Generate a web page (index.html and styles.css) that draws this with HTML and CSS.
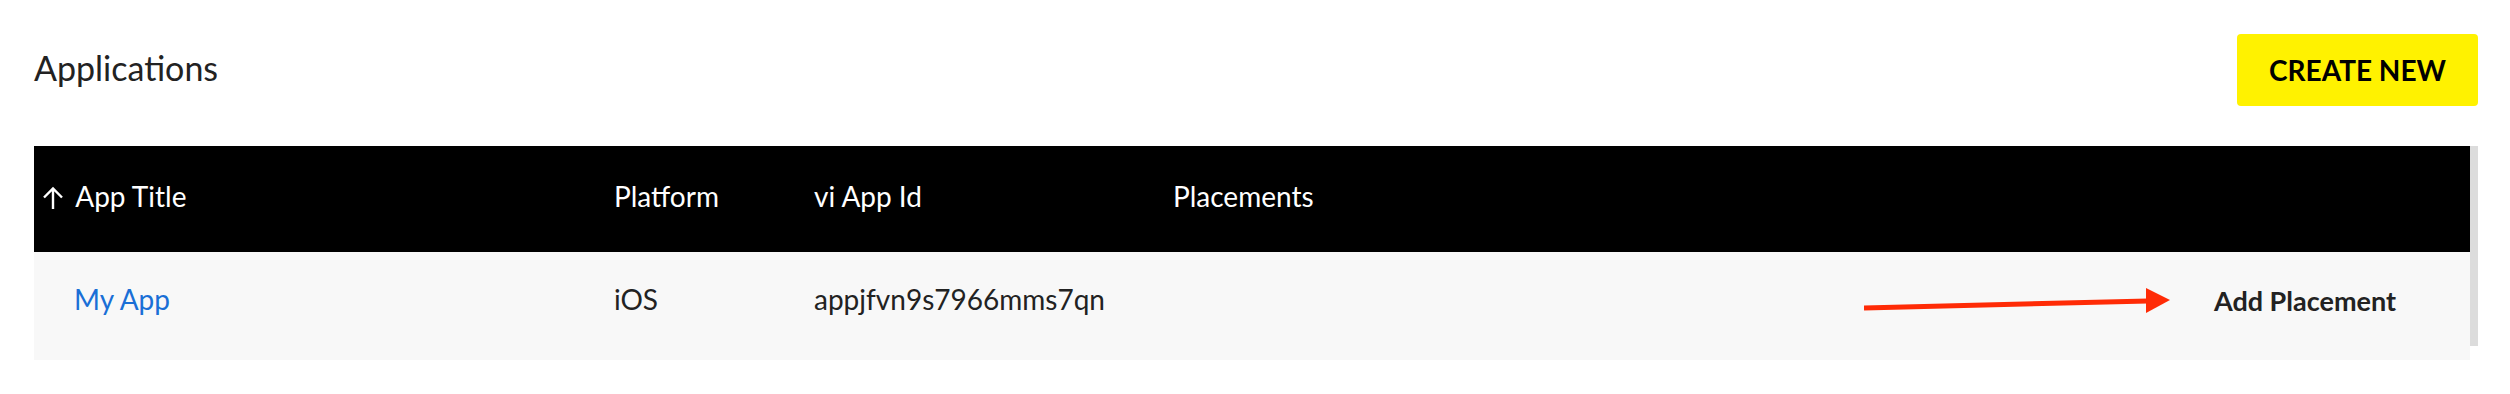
FILE: index.html
```html
<!DOCTYPE html>
<html lang="en">
<head>
  <meta charset="UTF-8">
  <title>Applications</title>
  <link rel="stylesheet" href="styles.css">
</head>
<body>
  <div class="page-header">
    <h1>Applications</h1>
    <button class="create-btn">CREATE NEW</button>
  </div>
  <div class="table-wrap">
    <table class="apps-table">
      <colgroup>
        <col class="col-title">
        <col class="col-platform">
        <col class="col-id">
        <col>
      </colgroup>
      <thead>
        <tr>
          <th class="sortable">
            <svg class="sort-arrow" width="22" height="24" viewBox="0 0 22 24"><path d="M11 23V2.5M2 11.5l9-9 9 9" fill="none" stroke="#fff" stroke-width="2.4"/></svg>
            App Title
          </th>
          <th>Platform</th>
          <th>vi App Id</th>
          <th>Placements</th>
        </tr>
      </thead>
      <tbody>
        <tr>
          <td class="app-name"><a href="#">My App</a></td>
          <td>iOS</td>
          <td>appjfvn9s7966mms7qn</td>
          <td class="actions">
            <!-- pointer drawn over the screenshot -->
            <svg class="pointer" width="306" height="30" viewBox="0 0 306 30"><path d="M0 22L284 15" stroke="#ff2b06" stroke-width="5"/><polygon points="282,2 306,14 282,27" fill="#ff2b06"/></svg>
            <span class="add-placement">Add Placement</span>
          </td>
        </tr>
      </tbody>
    </table>
    <div class="scroll-track"></div>
  </div>
</body>
</html>
```

FILE: styles.css
```css
body {
  margin: 0;
  padding: 34px 32px 0 34px;
  font-family: Lato, "Open Sans", sans-serif;
  color: #222;
  background: #fff;
}
.page-header {
  display: flex;
  justify-content: space-between;
  align-items: center;
  height: 72px;
}
.page-header h1 {
  margin: 0;
  padding-bottom: 6px;
  font-size: 34px;
  font-weight: 400;
  color: #222;
}
.create-btn {
  height: 72px;
  width: 241px;
  background-color: #fff200;
  border: none;
  border-radius: 4px;
  font-family: inherit;
  font-size: 28px;
  font-weight: 700;
  color: #000;
  cursor: pointer;
}
.table-wrap {
  display: flex;
  margin-top: 40px;
}
.apps-table {
  flex: 1;
  border-collapse: collapse;
  table-layout: fixed;
}
.col-title { width: 580px; }
.col-platform { width: 200px; }
.col-id { width: 359px; }
.apps-table th {
  height: 100px;
  padding: 0 0 6px 0;
  background-color: #000;
  color: #fff;
  font-size: 28px;
  font-weight: 400;
  text-align: left;
}
.apps-table th.sortable {
  padding-left: 8px;
}
.sort-arrow {
  vertical-align: -3px;
  margin-right: 5px;
}
.apps-table td {
  height: 94px;
  padding: 0 0 14px 0;
  background-color: #f8f8f8;
  font-size: 28px;
}
.apps-table td.app-name {
  padding-left: 40px;
}
.app-name a {
  color: #1a6fd6;
  text-decoration: none;
}
.apps-table td.actions {
  text-align: right;
  padding-right: 74px;
}
.pointer {
  vertical-align: middle;
  margin-right: 37px;
}
.add-placement {
  font-size: 27px;
  font-weight: 700;
  color: #222;
  vertical-align: middle;
}
.scroll-track {
  width: 8px;
  height: 200px;
  background-color: #dcdcdc;
}
```
